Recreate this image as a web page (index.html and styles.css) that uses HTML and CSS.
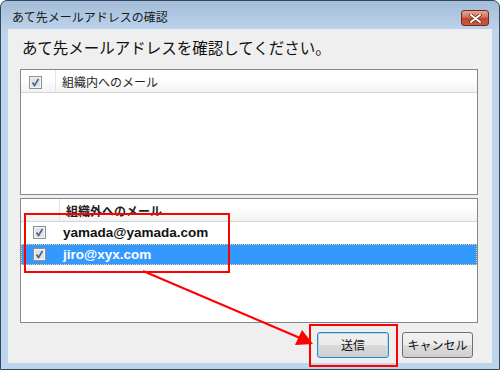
FILE: index.html
```html
<!DOCTYPE html>
<html>
	<head>
		<meta charset="utf-8">
		<title>あて先メールアドレスの確認</title>
		<link rel="stylesheet" href="styles.css">
	</head>
	<body>
		<div class="window">
			<div class="titlebar">
				<span class="title">あて先メールアドレスの確認</span>
				<div class="close">
					<svg width="13" height="9" viewBox="0 0 13 9">
						<path d="M2 1 L11 8 M11 1 L2 8" stroke="#6b1d12" stroke-width="3.4" stroke-linecap="round"/>
						<path d="M2 1 L11 8 M11 1 L2 8" stroke="#fff" stroke-width="2" stroke-linecap="round"/>
					</svg>
				</div>
			</div>
			<div class="client">
				<div class="heading">あて先メールアドレスを確認してください。</div>

				<!-- 組織内 -->
				<div class="list list-in">
					<div class="list-head">
						<div class="col-check">
							<svg class="chk" width="13" height="13" viewBox="0 0 13 13">
								<rect x="0.5" y="0.5" width="12" height="12" fill="#f4f4f4" stroke="#8e8f8f"/>
								<rect x="2" y="2" width="9" height="9" fill="#e3e3e3"/>
								<path d="M3.5 6.5 L5.5 9.5 L9.5 3" fill="none" stroke="#4b5f99" stroke-width="1.6"/>
							</svg>
						</div>
						<div class="col-name">組織内へのメール</div>
					</div>
				</div>

				<!-- 組織外 -->
				<div class="list list-out">
					<div class="list-head">
						<div class="col-check"></div>
						<div class="col-name bold">組織外へのメール</div>
					</div>
					<div class="row">
						<svg class="chk" width="13" height="13" viewBox="0 0 13 13">
							<rect x="0.5" y="0.5" width="12" height="12" fill="#f4f4f4" stroke="#8e8f8f"/>
							<rect x="2" y="2" width="9" height="9" fill="#e3e3e3"/>
							<path d="M3.5 6.5 L5.5 9.5 L9.5 3" fill="none" stroke="#4b5f99" stroke-width="1.6"/>
						</svg>
						<span class="mail">yamada@yamada.com</span>
					</div>
					<div class="row selected">
						<svg class="chk" width="13" height="13" viewBox="0 0 13 13">
							<rect x="0.5" y="0.5" width="12" height="12" fill="#f4f4f4" stroke="#8e8f8f"/>
							<rect x="2" y="2" width="9" height="9" fill="#e3e3e3"/>
							<path d="M3.5 6.5 L5.5 9.5 L9.5 3" fill="none" stroke="#4b5f99" stroke-width="1.6"/>
						</svg>
						<span class="mail">jiro@xyx.com</span>
					</div>
				</div>

				<div class="buttons">
					<div class="btn btn-default">送信</div>
					<div class="btn">キャンセル</div>
				</div>
			</div>

			<!-- 注釈 -->
			<div class="mark mark-list"></div>
			<div class="mark mark-send"></div>
			<svg class="arrow" width="500" height="370" viewBox="0 0 500 370">
				<line x1="143" y1="271" x2="300" y2="338" stroke="#ff0000" stroke-width="2"/>
				<polygon points="313,344 295,345 302,330" fill="#ff0000"/>
			</svg>
		</div>
	</body>
</html>
```

FILE: styles.css
```css
*{
	padding: 0;
	margin: 0;
	box-sizing: border-box;
}
html,body{
	width: 100%;
	height: 100%;
	background: #fff;
}
body{
	font-family: "Noto Sans CJK JP", "Liberation Sans", sans-serif;
	color: #1e1e1e;
}
.window{
	position: relative;
	width: 500px;
	height: 370px;
	border: 1px solid #34465c;
	border-radius: 7px 7px 0 0;
	background: linear-gradient(#a4bdd8, #bcd4ec 30px, #bcd4ec);
	padding: 0 7px 6px 7px;
	display: flex;
	flex-direction: column;
}
.titlebar{
	height: 28px;
	display: flex;
	align-items: flex-start;
	justify-content: space-between;
}
.title{
	font-size: 12px;
	line-height: 16px;
	margin: 8px 0 0 4px;
	color: #1b1b1b;
}
.close{
	width: 28px;
	height: 16px;
	margin: 9px 3px 0 0;
	border: 1px solid #6d2a22;
	border-radius: 3px;
	background: linear-gradient(#e8a494, #d2705a 45%, #c0452c 50%, #c95a3c);
	display: flex;
	align-items: center;
	justify-content: center;
}
.client{
	flex: 1;
	background: #efefef;
	padding: 7px 14px 0 12px;
	display: flex;
	flex-direction: column;
}
.heading{
	font-size: 15.5px;
	line-height: 22px;
	height: 22px;
	margin: 0 0 11px 2px;
	color: #111;
}
.list{
	background: #fff;
	border: 1px solid #828790;
}
.list-in{
	height: 126px;
}
.list-out{
	height: 125px;
	margin-top: 3px;
}
.list-head{
	display: flex;
	height: 23px;
	background: linear-gradient(#fff, #fff 40%, #f1f2f4);
	border-bottom: 1px solid #d5d5d5;
	font-size: 12px;
}
.col-check{
	display: flex;
	align-items: center;
	padding: 3px 0 0 8px;
	border-right: 1px solid #e3e4e6;
	width: 35px;
}
.list-out .col-check{
	width: 39px;
}
.col-name{
	flex: 1;
	line-height: 20px;
	padding: 2px 0 0 6px;
}
.bold{
	font-weight: bold;
}
.row{
	display: flex;
	align-items: center;
	height: 21px;
	padding-left: 12px;
}
.row + .row{
	margin-top: 1px;
}
.row .chk{
	margin-right: 17px;
}
.mail{
	font-family: "Liberation Sans", sans-serif;
	font-weight: bold;
	font-size: 13.5px;
	color: #111;
}
.row.selected{
	background: #3399ff;
	outline: 1px dotted #f4d27c;
	outline-offset: -1px;
}
.row.selected .mail{
	color: #fff;
}
.buttons{
	display: flex;
	justify-content: flex-end;
	gap: 13px;
	margin: 9px 5px 0 0;
}
.btn{
	height: 26px;
	width: 71px;
	border: 1px solid #707070;
	border-radius: 3px;
	background: linear-gradient(#f2f2f2, #ebebeb 50%, #dddddd 50%, #cfcfcf);
	font-size: 12px;
	line-height: 24px;
	text-align: center;
	color: #111;
}
.btn-default{
	width: 72px;
	border-color: #3c7fb1;
	box-shadow: inset 0 0 0 1px #a6dcf5;
	background: linear-gradient(#f1f1f1, #e9e9e9 50%, #dbdbdb 50%, #cdcdcd);
}
.mark{
	position: absolute;
	border: 2px solid #ff0000;
}
.mark-list{
	left: 23px;
	top: 212px;
	width: 206px;
	height: 60px;
}
.mark-send{
	left: 308px;
	top: 323px;
	width: 89px;
	height: 43px;
}
.arrow{
	position: absolute;
	left: -1px;
	top: -1px;
	pointer-events: none;
}
```
